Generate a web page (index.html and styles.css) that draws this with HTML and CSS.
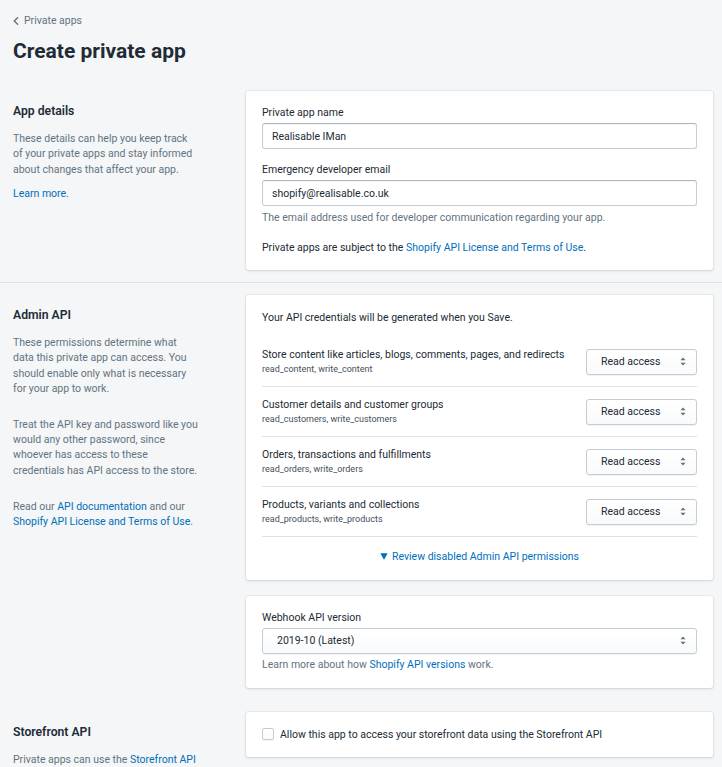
FILE: index.html
```html
<!DOCTYPE html>
<html lang="en">
<head>
<meta charset="utf-8">
<title>Create private app</title>
<link rel="stylesheet" href="styles.css">
</head>
<body>
<div class="page">
  <header class="header">
    <a class="breadcrumb" href="#">
      <svg class="chev" width="6" height="8" viewBox="0 0 6 8"><polyline points="4.6,0.7 1.2,4 4.6,7.3" fill="none" stroke="#637381" stroke-width="1.4" stroke-linecap="round" stroke-linejoin="round"/></svg>
      <span>Private apps</span>
    </a>
    <h1 class="title">Create private app</h1>
  </header>

  <section class="section s-details">
    <div class="annotation">
      <h2 class="ann-heading">App details</h2>
      <p class="ann-text">These details can help you keep track of your private apps and stay informed about changes that affect your app.</p>
      <p class="ann-text ann-tight"><a class="link" href="#">Learn more.</a></p>
    </div>
    <div class="content">
      <div class="card">
        <div class="field">
          <div class="label">Private app name</div>
          <div class="input">Realisable IMan</div>
        </div>
        <div class="field field-next">
          <div class="label">Emergency developer email</div>
          <div class="input">shopify@realisable.co.uk</div>
          <div class="help">The email address used for developer communication regarding your app.</div>
        </div>
        <p class="card-note">Private apps are subject to the <a class="link" href="#">Shopify API License and Terms of Use</a>.</p>
      </div>
    </div>
  </section>

  <hr class="divider">

  <section class="section s-admin">
    <div class="annotation">
      <h2 class="ann-heading">Admin API</h2>
      <p class="ann-text">These permissions determine what data this private app can access. You should enable only what is necessary for your app to work.</p>
      <p class="ann-text ann-wide">Treat the API key and password like you would any other password, since whoever has access to these credentials has API access to the store.</p>
      <p class="ann-text ann-wide">Read our <a class="link" href="#">API documentation</a> and our <a class="link" href="#">Shopify API License and Terms of Use</a>.</p>
    </div>
    <div class="content">
      <div class="card">
        <p class="intro">Your API credentials will be generated when you Save.</p>
        <div class="rows">
          <div class="row">
            <div class="row-text">
              <div class="row-title">Store content like articles, blogs, comments, pages, and redirects</div>
              <div class="row-sub">read_content, write_content</div>
            </div>
            <div class="select select-small"><span>Read access</span><svg class="arrows" width="6" height="9" viewBox="0 0 6 9"><path d="M3 0.5L5.6 3.3H0.4Z M3 8.5L5.6 5.7H0.4Z" fill="#637381"/></svg></div>
          </div>
          <div class="row">
            <div class="row-text">
              <div class="row-title">Customer details and customer groups</div>
              <div class="row-sub">read_customers, write_customers</div>
            </div>
            <div class="select select-small"><span>Read access</span><svg class="arrows" width="6" height="9" viewBox="0 0 6 9"><path d="M3 0.5L5.6 3.3H0.4Z M3 8.5L5.6 5.7H0.4Z" fill="#637381"/></svg></div>
          </div>
          <div class="row">
            <div class="row-text">
              <div class="row-title">Orders, transactions and fulfillments</div>
              <div class="row-sub">read_orders, write_orders</div>
            </div>
            <div class="select select-small"><span>Read access</span><svg class="arrows" width="6" height="9" viewBox="0 0 6 9"><path d="M3 0.5L5.6 3.3H0.4Z M3 8.5L5.6 5.7H0.4Z" fill="#637381"/></svg></div>
          </div>
          <div class="row">
            <div class="row-text">
              <div class="row-title">Products, variants and collections</div>
              <div class="row-sub">read_products, write_products</div>
            </div>
            <div class="select select-small"><span>Read access</span><svg class="arrows" width="6" height="9" viewBox="0 0 6 9"><path d="M3 0.5L5.6 3.3H0.4Z M3 8.5L5.6 5.7H0.4Z" fill="#637381"/></svg></div>
          </div>
        </div>
        <div class="review"><a class="link review-link" href="#"><svg class="tri" width="8" height="7" viewBox="0 0 8 7"><path d="M0.3 0.3H7.7L4 6.7Z" fill="#006fbb"/></svg>Review disabled Admin API permissions</a></div>
      </div>

      <div class="card card-next">
        <div class="label">Webhook API version</div>
        <div class="select select-wide"><span>2019-10 (Latest)</span><svg class="arrows" width="6" height="9" viewBox="0 0 6 9"><path d="M3 0.5L5.6 3.3H0.4Z M3 8.5L5.6 5.7H0.4Z" fill="#637381"/></svg></div>
        <div class="help">Learn more about how <a class="link" href="#">Shopify API versions</a> work.</div>
      </div>
    </div>
  </section>

  <section class="section s-store">
    <div class="annotation">
      <h2 class="ann-heading">Storefront API</h2>
      <p class="ann-text">Private apps can use the <a class="link" href="#">Storefront API</a> to access your store's data, such as products and collections.</p>
    </div>
    <div class="content">
      <div class="card">
        <label class="check">
          <span class="box"></span>
          <span>Allow this app to access your storefront data using the Storefront API</span>
        </label>
      </div>
    </div>
  </section>
</div>
</body>
</html>
```

FILE: styles.css
```css
* { box-sizing: border-box; }

html, body {
  margin: 0;
  padding: 0;
}

body {
  background: #f4f6f8;
  color: #212b36;
  font-family: Roboto, "Liberation Sans", Arial, sans-serif;
  font-size: 10.5px;
  line-height: 15px;
  overflow: hidden;
}

a { text-decoration: none; }

.link { color: #006fbb; }

p { margin: 0; }

.page {
  padding: 0 9px 0 13px;
}

/* header */
.header {
  padding-top: 13px;
}

.breadcrumb {
  display: flex;
  align-items: center;
  gap: 5px;
  color: #637381;
  line-height: 16px;
  height: 16px;
}

.chev { display: block; }

.title {
  margin: 8px 0 0;
  font-size: 21px;
  line-height: 28px;
  font-weight: 700;
  color: #212b36;
}

/* sections */
.section {
  display: flex;
}

.s-details { padding: 26px 0 12px; }
.s-admin { padding: 12px 0 0; }
.s-store { padding: 24px 0 0; }

.annotation {
  flex: none;
  width: 233px;
  padding: 12px 46px 0 0;
}

.s-details .annotation {
  padding-right: 49px;
}

.ann-heading {
  margin: 0;
  font-size: 12.2px;
  line-height: 16px;
  font-weight: 600;
  color: #212b36;
}

.ann-text {
  margin-top: 12px;
  color: #637381;
  line-height: 15.3px;
}

.ann-tight { margin-top: 8.7px; }
.ann-wide { margin-top: 20.7px; }

.content {
  flex: 1;
  min-width: 0;
}

.divider {
  border: 0;
  height: 1px;
  background: #dfe3e8;
  margin: 0 -9px 0 -13px;
}

/* cards */
.card {
  background: #fff;
  border-radius: 3px;
  box-shadow: 0 0 0 1px rgba(63, 63, 68, 0.05), 0 1px 3px 0 rgba(63, 63, 68, 0.15);
  padding: 15px 16px 15.5px;
}

.card-next { margin-top: 16px; }

.label {
  line-height: 13px;
  margin-bottom: 4px;
  color: #212b36;
}

.field-next { margin-top: 14px; }

.input {
  height: 26px;
  display: flex;
  align-items: center;
  padding: 0 9px;
  border: 1px solid #c4cdd5;
  border-top-color: #aeb4b9;
  border-radius: 3px;
  background: #fff;
  box-shadow: inset 0 1px 0 0 rgba(99, 115, 129, 0.05);
  color: #212b36;
}

.help {
  margin-top: 3.5px;
  color: #637381;
  line-height: 15px;
}

.card-note {
  margin-top: 15px;
}

.intro {
  line-height: 15px;
}

.rows {
  margin-top: 12px;
}

.row {
  display: flex;
  align-items: center;
  justify-content: space-between;
  height: 50px;
  border-bottom: 1px solid #dfe3e8;
}

.row-title {
  line-height: 15px;
}

.row-sub {
  font-size: 9px;
  line-height: 14px;
  color: #454f5b;
}

.select {
  height: 26px;
  display: flex;
  align-items: center;
  justify-content: space-between;
  border: 1px solid #c4cdd5;
  border-radius: 3px;
  background: linear-gradient(180deg, #fff, #f9fafb);
  box-shadow: 0 1px 0 0 rgba(22, 29, 37, 0.05);
  color: #212b36;
  padding-right: 10px;
}

.select-small {
  flex: none;
  width: 111px;
  padding-left: 14px;
}

.select-wide {
  padding-left: 14px;
}

.arrows { display: block; flex: none; }

.review {
  margin-top: 12px;
  text-align: center;
  line-height: 15px;
}

.review-link {
  display: inline-flex;
  align-items: center;
  gap: 4px;
}

.tri { display: block; }

.check {
  display: flex;
  align-items: center;
  gap: 6px;
  line-height: 15px;
}

.box {
  width: 12px;
  height: 12px;
  border: 1px solid #c4cdd5;
  border-radius: 2px;
  background: linear-gradient(180deg, #fff, #f9fafb);
  box-shadow: 0 1px 0 0 rgba(22, 29, 37, 0.05);
  flex: none;
}
```
